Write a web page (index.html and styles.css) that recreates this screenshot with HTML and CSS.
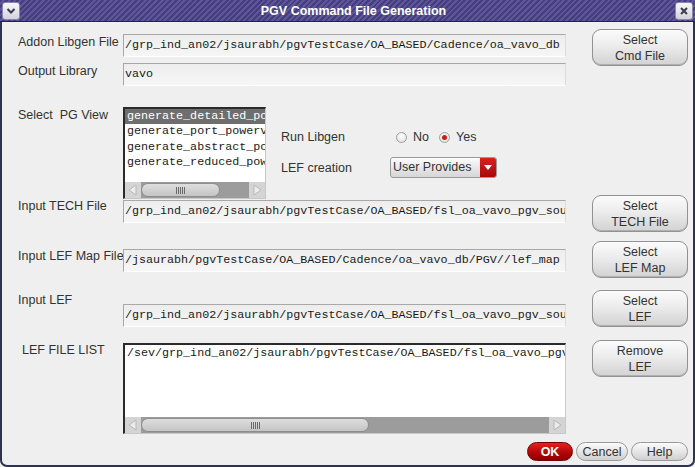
FILE: index.html
```html
<!DOCTYPE html>
<html>
<head>
<meta charset="utf-8">
<link rel="stylesheet" href="styles.css">
</head>
<body>
<div class="window">
  <div class="titlebar">
    <span class="tbtn"><svg width="12" height="12" viewBox="0 0 12 12"><polyline points="2.5,4 6,7.5 9.5,4" fill="none" stroke="#3a3a4a" stroke-width="2"/></svg></span>
    <span class="title">PGV Command File Generation</span>
    <span class="tbtn"><svg width="12" height="12" viewBox="0 0 12 12"><path d="M3 3 L9 9 M9 3 L3 9" stroke="#3a3a4a" stroke-width="2"/></svg></span>
  </div>
  <div class="body">
    <div class="row r1">
      <div class="label">Addon Libgen File</div>
      <div class="field">/grp_ind_an02/jsaurabh/pgvTestCase/OA_BASED/Cadence/oa_vavo_db</div>
      <div></div>
      <button class="btn">Select<br>Cmd File</button>
    </div>
    <div class="row r2">
      <div class="label">Output Library</div>
      <div class="field">vavo</div>
    </div>
    <div class="row r3">
      <div class="label">Select&nbsp; PG View</div>
      <div class="list">
        <div class="item sel">generate_detailed_power</div>
        <div class="item">generate_port_powerview</div>
        <div class="item">generate_abstract_power</div>
        <div class="item">generate_reduced_power</div>
        <div class="hscroll">
          <span class="arrow"><svg width="16" height="16" viewBox="0 0 16 16"><polygon points="11,3 4,8 11,13" fill="#ececec" stroke="#b8b8b8"/></svg></span>
          <span class="track"><span class="thumb t1"><span class="grip"></span></span></span>
          <span class="arrow"><svg width="16" height="16" viewBox="0 0 16 16"><polygon points="5,3 12,8 5,13" fill="#ececec" stroke="#b8b8b8"/></svg></span>
        </div>
      </div>
      <div class="opts">
        <div class="olabel">Run Libgen</div>
        <div class="radios">
          <span class="radio"></span><span class="rtext">No</span>
          <span class="radio on"></span><span class="rtext">Yes</span>
        </div>
        <div class="olabel">LEF creation</div>
        <div class="combo"><span class="ctext">User Provides</span><span class="cbtn"><svg width="8" height="6" viewBox="0 0 8 6"><polygon points="0,0 8,0 4,5" fill="#fff"/></svg></span></div>
      </div>
    </div>
    <div class="row r4">
      <div class="label">Input TECH File</div>
      <div class="field">/grp_ind_an02/jsaurabh/pgvTestCase/OA_BASED/fsl_oa_vavo_pgv_sou</div>
      <div></div>
      <button class="btn">Select<br>TECH File</button>
    </div>
    <div class="row r5">
      <div class="label">Input LEF Map File</div>
      <div class="field">/jsaurabh/pgvTestCase/OA_BASED/Cadence/oa_vavo_db/PGV//lef_map</div>
      <div></div>
      <button class="btn">Select<br>LEF Map</button>
    </div>
    <div class="row r6">
      <div class="label">Input LEF</div>
      <div class="field">/grp_ind_an02/jsaurabh/pgvTestCase/OA_BASED/fsl_oa_vavo_pgv_sou</div>
      <div></div>
      <button class="btn">Select<br>LEF</button>
    </div>
    <div class="row r7">
      <div class="label">LEF FILE LIST</div>
      <div class="textlist">
        <div class="tline">/sev/grp_ind_an02/jsaurabh/pgvTestCase/OA_BASED/fsl_oa_vavo_pgv_s</div>
        <div class="hscroll">
          <span class="arrow"><svg width="16" height="16" viewBox="0 0 16 16"><polygon points="11,3 4,8 11,13" fill="#ececec" stroke="#b8b8b8"/></svg></span>
          <span class="track"><span class="thumb t2"><span class="grip"></span></span></span>
          <span class="arrow"><svg width="16" height="16" viewBox="0 0 16 16"><polygon points="5,3 12,8 5,13" fill="#ececec" stroke="#b8b8b8"/></svg></span>
        </div>
      </div>
      <div></div>
      <button class="btn">Remove<br>LEF</button>
    </div>
    <div class="footer">
      <button class="pill ok">OK</button>
      <button class="pill">Cancel</button>
      <button class="pill help">Help</button>
    </div>
  </div>
</div>
</body>
</html>
```

FILE: styles.css
```css
html, body {
  margin: 0;
  padding: 0;
}
body {
  width: 695px;
  height: 467px;
  overflow: hidden;
  font-family: "Liberation Sans", Arial, sans-serif;
  background: #efefef;
}
.window {
  width: 695px;
  height: 467px;
  display: flex;
  flex-direction: column;
  background: #efefef;
}
.titlebar {
  height: 22px;
  flex: none;
  box-sizing: border-box;
  display: flex;
  align-items: center;
  padding: 0 2px;
  background: repeating-linear-gradient(135deg, #463e7c 0 2px, #5d569c 2px 4px);
  border-bottom: 1px solid #26224a;
}
.title {
  flex: 1;
  text-align: center;
  color: #fff;
  font-weight: bold;
  font-size: 12.5px;
  padding-left: 12px;
}
.tbtn {
  width: 18px;
  height: 18px;
  box-sizing: border-box;
  border: 1px solid #8a88a8;
  border-radius: 3px;
  background: linear-gradient(#f6f6fa, #d2d2de);
  display: flex;
  align-items: center;
  justify-content: center;
}
.body {
  flex: 1;
  box-sizing: border-box;
  border: 2px solid #2e3150;
  border-top: none;
  border-radius: 0 0 7px 7px;
  padding-top: 6px;
  display: flex;
  flex-direction: column;
}
.row {
  display: grid;
  grid-template-columns: 121px 443px 26px 96px;
  align-items: start;
  flex: none;
}
.label {
  padding-left: 16px;
  font-size: 12.5px;
  line-height: 14px;
  color: #333;
  white-space: nowrap;
  overflow: hidden;
}
.field {
  box-sizing: border-box;
  height: 23px;
  border: 1px solid;
  border-color: #a8a8a8 #dcdcdc #ffffff #a8a8a8;
  background: linear-gradient(#ededed, #f6f6f6);
  font-family: "Liberation Mono", "Courier New", monospace;
  font-size: 11.7px;
  line-height: 21px;
  padding-left: 1px;
  color: #1a1a1a;
  white-space: nowrap;
  overflow: hidden;
}
.btn {
  width: 96px;
  height: 37px;
  box-sizing: border-box;
  border: 1px solid #929292;
  border-radius: 9px;
  background: linear-gradient(#fbfbfb, #ececec 45%, #d2d2d2);
  box-shadow: inset 0 -1px 0 #b0b0b0;
  font-family: "Liberation Sans", Arial, sans-serif;
  font-size: 12.5px;
  line-height: 16px;
  color: #333;
  padding: 0;
  text-align: center;
}

/* row geometry */
.r1 { height: 35px; }
.r1 .label { margin-top: 7px; }
.r1 .field { margin-top: 6px; }
.r1 .btn { margin-top: 1px; }

.r2 { height: 41px; }
.r2 .label { margin-top: 1px; }

.r3 {
  height: 90px;
  grid-template-columns: 121px 143px auto;
}
.r3 .label { margin-top: 4px; }

.r4 { height: 44px; }
.r4 .label { margin-top: 5px; }
.r4 .field { margin-top: 6px; }
.r4 .btn { margin-top: 1px; }

.r5 { height: 48px; }
.r5 .label { margin-top: 11px; }
.r5 .field { margin-top: 11px; }
.r5 .btn { margin-top: 3px; }

.r6 { height: 50px; }
.r6 .label { margin-top: 7px; }
.r6 .field { margin-top: 18px; }
.r6 .btn { margin-top: 4px; }

.r7 { height: 99px; }
.r7 .label { margin-top: 7px; padding-left: 20px; }
.r7 .btn { margin-top: 4px; }

/* list */
.list {
  margin-top: 3px;
  height: 92px;
  box-sizing: border-box;
  border-style: solid;
  border-width: 2px 1px 1px 2px;
  border-color: #2a2a2a #c8c8c8 #c8c8c8 #2a2a2a;
  background: #fff;
  display: flex;
  flex-direction: column;
  overflow: hidden;
}
.item {
  font-family: "Liberation Mono", "Courier New", monospace;
  font-size: 11.7px;
  line-height: 15.4px;
  padding-left: 2px;
  white-space: nowrap;
  color: #1a1a1a;
}
.item.sel {
  background: #6e6e6e;
  color: #fff;
}
.hscroll {
  margin-top: auto;
  height: 16px;
  flex: none;
  display: flex;
  background: #9c9c9c;
}
.arrow {
  width: 16px;
  height: 16px;
  flex: none;
  background: #d4d4d4;
  display: flex;
}
.track {
  flex: 1;
  display: flex;
  align-items: center;
}
.thumb {
  height: 14px;
  box-sizing: border-box;
  border: 1px solid #8e8e8e;
  border-radius: 8px;
  background: linear-gradient(#dedede, #c4c4c4);
  display: flex;
  align-items: center;
  justify-content: center;
}
.t1 { width: 79px; }
.t2 { width: 228px; }
.grip {
  width: 9px;
  height: 7px;
  background: repeating-linear-gradient(90deg, #6a6a6a 0 1px, transparent 1px 2px);
}

/* options */
.opts {
  margin-left: 15px;
  margin-top: 25px;
  display: grid;
  grid-template-columns: 109px auto;
  row-gap: 12px;
  align-items: center;
}
.olabel {
  font-size: 12.5px;
  line-height: 14px;
  color: #333;
}
.opts .olabel:nth-of-type(2) {
  padding-top: 2px;
}
.radios {
  display: flex;
  align-items: center;
  height: 16px;
  padding-left: 6px;
}
.radio {
  width: 11px;
  height: 11px;
  box-sizing: border-box;
  border-radius: 50%;
  border: 1px solid #a0a0a0;
  background: radial-gradient(circle at 50% 35%, #ffffff, #dadada);
  display: inline-flex;
  align-items: center;
  justify-content: center;
}
.radio.on::after {
  content: "";
  width: 5px;
  height: 5px;
  border-radius: 50%;
  background: #d01818;
}
.rtext {
  font-size: 12.5px;
  color: #333;
  margin-left: 6px;
  margin-right: 10px;
}
.combo {
  width: 107px;
  height: 21px;
  box-sizing: border-box;
  border: 1px solid #9a9a9a;
  border-radius: 3px;
  background: linear-gradient(#fcfcfc, #e4e4e4 60%, #d6d6d6);
  display: flex;
  align-items: stretch;
  overflow: hidden;
}
.ctext {
  flex: 1;
  font-size: 12.5px;
  line-height: 18px;
  padding-left: 2px;
  color: #333;
  white-space: nowrap;
}
.cbtn {
  width: 16px;
  background: linear-gradient(#d82020, #a80808);
  display: flex;
  align-items: center;
  justify-content: center;
}

/* LEF file list */
.textlist {
  margin-top: 7px;
  height: 91px;
  box-sizing: border-box;
  border-style: solid;
  border-width: 2px 1px 1px 2px;
  border-color: #2a2a2a #c8c8c8 #c8c8c8 #2a2a2a;
  background: #fff;
  display: flex;
  flex-direction: column;
  overflow: hidden;
}
.tline {
  font-family: "Liberation Mono", "Courier New", monospace;
  font-size: 11.7px;
  line-height: 14px;
  padding-left: 2px;
  padding-top: 1px;
  white-space: nowrap;
  color: #1a1a1a;
}

/* footer */
.footer {
  display: flex;
  justify-content: flex-end;
  gap: 3px;
  padding-right: 5px;
  margin-top: 7px;
}
.pill {
  height: 19px;
  box-sizing: border-box;
  border: 1px solid #9a9a9a;
  border-radius: 10px;
  background: linear-gradient(#fbfbfb, #e6e6e6 50%, #cfcfcf);
  font-family: "Liberation Sans", Arial, sans-serif;
  font-size: 12.5px;
  line-height: 16px;
  color: #333;
  padding: 0;
  width: 52px;
}
.pill.ok {
  width: 46px;
  border-color: #7a0000;
  background: linear-gradient(#e42222, #b00404 60%, #8c0000);
  color: #fff;
  font-weight: bold;
}
.pill.help {
  width: 57px;
}
```
